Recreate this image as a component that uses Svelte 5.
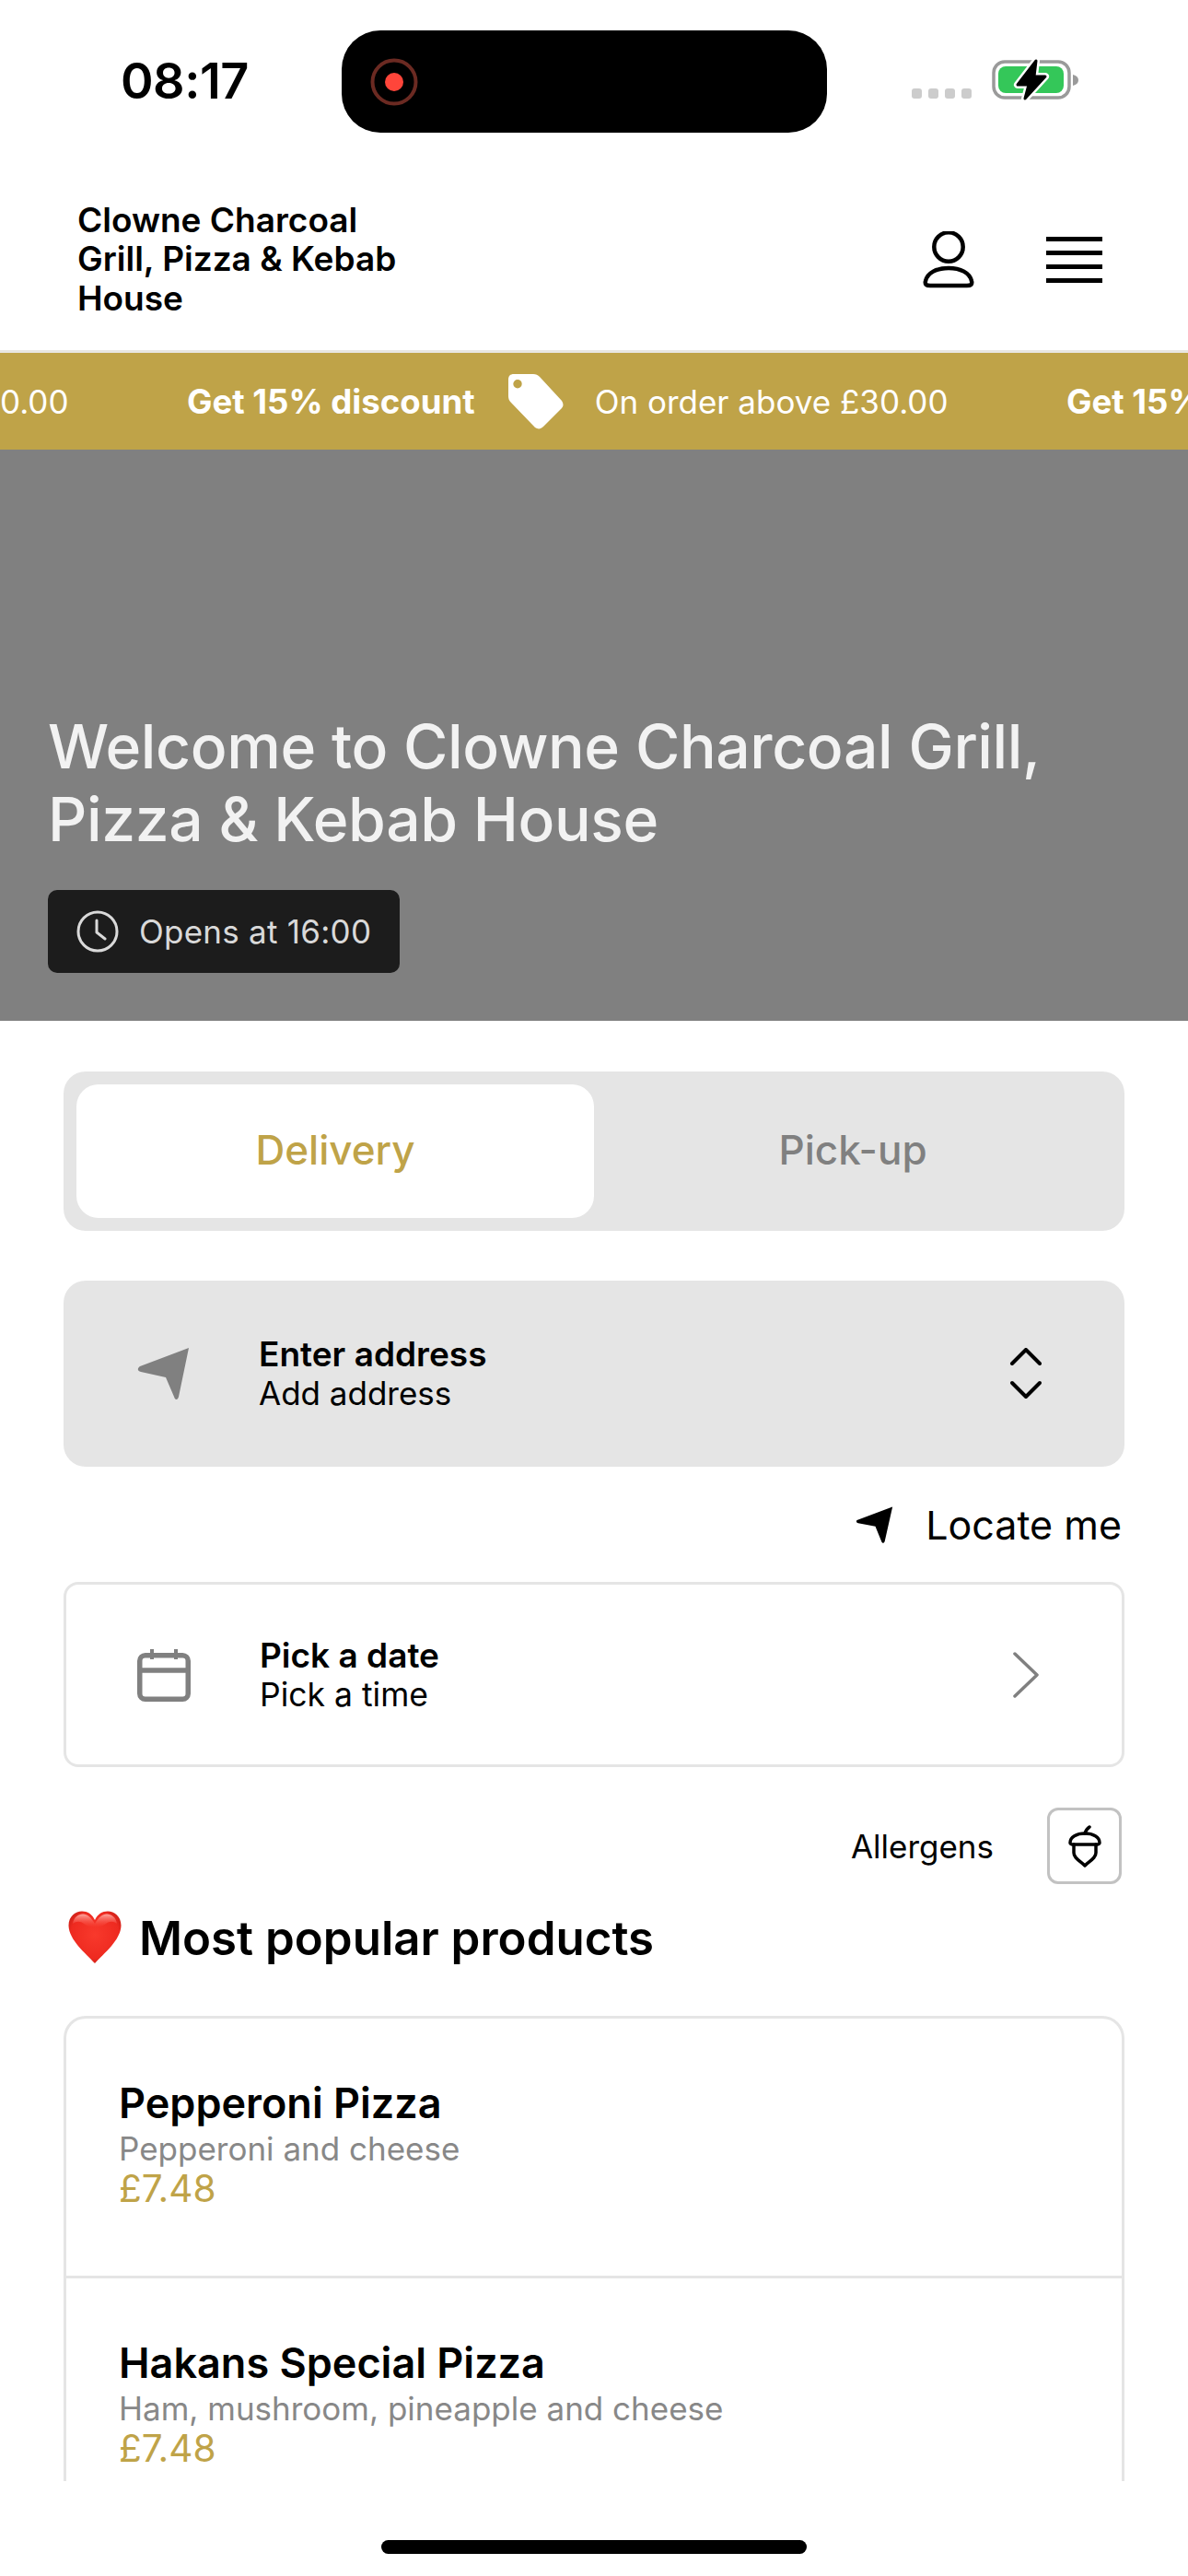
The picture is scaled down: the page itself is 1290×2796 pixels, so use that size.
<script lang="ts">
  const products = [
    { name: 'Pepperoni Pizza', description: 'Pepperoni and cheese', price: '£7.48' },
    { name: 'Hakans Special Pizza', description: 'Ham, mushroom, pineapple and cheese', price: '£7.48' }
  ];
  const promos = [0, 1, 2];
</script>

<div class="screen">
  <div class="status-bar">
    <span class="time">08:17</span>
    <div class="island">
      <svg class="record" width="52" height="52" viewBox="0 0 52 52">
        <circle cx="26" cy="26" r="23.5" fill="none" stroke="#6b2a22" stroke-width="4" />
        <circle cx="26" cy="26" r="10" fill="#ff453a" />
      </svg>
    </div>
    <div class="signal">
      <i></i><i></i><i></i><i></i>
    </div>
    <svg class="battery" width="96" height="56" viewBox="0 0 96 56">
      <rect x="2" y="7" width="82" height="39" rx="12" fill="none" stroke="#9a9a9a" stroke-width="3.5" />
      <rect x="7" y="12" width="71" height="29" rx="8" fill="#34c759" />
      <path d="M88 21 C92 22 94 24 94 27 C94 30 92 32 88 33 Z" fill="#9a9a9a" />
      <path d="M48 6 L28 32 L40 32 L36 47 L58 23 L46 23 Z" fill="#fff" stroke="#fff" stroke-width="8" stroke-linejoin="round" />
      <path d="M48 6 L28 32 L40 32 L36 47 L58 23 L46 23 Z" fill="#000" stroke="#000" stroke-width="3" stroke-linejoin="round" />
    </svg>
  </div>

  <header class="top-bar">
    <h1 class="brand">Clowne Charcoal<br />Grill, Pizza &amp; Kebab<br />House</h1>
    <div class="top-actions">
      <svg width="58" height="62" viewBox="0 0 58 62" fill="none" stroke="#000" stroke-width="4.5">
        <circle cx="29" cy="17" r="15.7" />
        <path d="M29 40 C42 40 52 45 54 54 C55 58 53 59 49 59 L9 59 C5 59 3 58 4 54 C6 45 16 40 29 40 Z" />
      </svg>
      <svg width="61" height="50" viewBox="0 0 61 50" fill="#000">
        <rect y="0" width="61" height="5" />
        <rect y="15" width="61" height="5" />
        <rect y="30" width="61" height="5" />
        <rect y="45" width="61" height="5" />
      </svg>
    </div>
  </header>

  <div class="promo">
    <div class="promo-track">
      {#each promos as _}
        <div class="promo-item">
          <strong>Get 15% discount</strong>
          <svg width="62" height="62" viewBox="0 0 62 62">
            <path fill-rule="evenodd" fill="#fff" d="M7 1 L28 1 C31 1 33 2 35 4 L59 30 C61 33 61 36 59 38 L39 58 C36 61 33 61 30 59 L4 32 C2 30 1 28 1 25 L1 7 C1 3 3 1 7 1 Z M11 7 A4.7 4.7 0 1 0 11.01 16.4 A4.7 4.7 0 1 0 11 7 Z" />
          </svg>
          <span>On order above £30.00</span>
        </div>
      {/each}
    </div>
  </div>

  <section class="hero">
    <h2>Welcome to Clowne Charcoal Grill,<br />Pizza &amp; Kebab House</h2>
    <div class="opens">
      <svg width="46" height="46" viewBox="0 0 46 46" fill="none" stroke="#d9d9d9" stroke-width="3">
        <circle cx="23" cy="23" r="21" />
        <path d="M22 11 L22 24 L31 31" stroke-linecap="round" stroke-linejoin="round" />
      </svg>
      <span>Opens at 16:00</span>
    </div>
  </section>

  <main class="content">
    <div class="tabs">
      <button type="button" class="tab active">Delivery</button>
      <button type="button" class="tab">Pick-up</button>
    </div>

    <div class="field filled">
      <svg class="field-icon" width="58" height="58" viewBox="0 0 58 58">
        <path d="M56 1 L45 54 C44 58 41 58 40 54 L31 33 L4 27 C0 26 0 23 3 21 Z" fill="#808080" />
      </svg>
      <div class="field-text">
        <strong>Enter address</strong>
        <span>Add address</span>
      </div>
      <svg class="field-end" width="36" height="56" viewBox="0 0 36 56" fill="none" stroke="#000" stroke-width="4" stroke-linecap="round" stroke-linejoin="round">
        <path d="M3 17 L18 2 L33 17" />
        <path d="M3 38 L18 53 L33 38" />
      </svg>
    </div>

    <div class="locate">
      <svg width="41" height="42" viewBox="0 0 44 44">
        <path d="M42 1 L33 41 C32 44 30 44 29 41 L22 24 L2 20 C-1 19 -1 17 2 16 Z" fill="#000" />
      </svg>
      <span>Locate me</span>
    </div>

    <div class="field outlined">
      <svg class="field-icon" width="58" height="58" viewBox="0 0 58 58" fill="none" stroke="#808080" stroke-width="5.5">
        <rect x="2.75" y="7.75" width="52.5" height="47.5" rx="6" />
        <path d="M2.5 24 L55.5 24" />
        <path d="M16 1 L16 12 M42 1 L42 12" stroke-width="4" />
      </svg>
      <div class="field-text">
        <strong>Pick a date</strong>
        <span>Pick a time</span>
      </div>
      <svg class="field-end" width="36" height="50" viewBox="0 0 36 50" fill="none" stroke="#808080" stroke-width="3.5" stroke-linecap="round" stroke-linejoin="round">
        <path d="M7 2 L31 25 L7 48" />
      </svg>
    </div>

    <div class="allergens">
      <span>Allergens</span>
      <button type="button" class="allergen-button" aria-label="Allergens">
        <svg width="38" height="46" viewBox="0 0 38 46" fill="none" stroke="#000" stroke-width="3.5" stroke-linecap="round" stroke-linejoin="round">
          <path d="M19 9 C20 6 21 4 24 2" />
          <path d="M3 19 C3 13 10 9 19 9 C28 9 35 13 35 19 C35 20 34 21 33 21 L5 21 C4 21 3 20 3 19 Z" />
          <path d="M7 21 L7 30 C7 36 14 39 19 44 C24 39 31 36 31 30 L31 21" />
        </svg>
      </button>
    </div>

    <h3 class="section-title">
      <svg width="58" height="58" viewBox="0 0 58 58">
        <defs>
          <radialGradient id="heartFill" cx="50%" cy="45%" r="65%">
            <stop offset="0%" stop-color="#f8392c" />
            <stop offset="70%" stop-color="#ee2a20" />
            <stop offset="100%" stop-color="#b81a12" />
          </radialGradient>
          <linearGradient id="heartShine" x1="0" y1="0" x2="0" y2="1">
            <stop offset="0%" stop-color="#ffb3ab" stop-opacity="0.9" />
            <stop offset="100%" stop-color="#ff5a4e" stop-opacity="0" />
          </linearGradient>
        </defs>
        <path d="M29 57 C19 46 1 32 0.5 16 C0.5 6 8 0.5 15 0.5 C21 0.5 26 3.5 29 10 C32 3.5 37 0.5 43 0.5 C50 0.5 57.5 6 57.5 16 C57 32 39 46 29 57 Z" fill="url(#heartFill)" />
        <path d="M5 14 C6 7 11 3.5 16 3.5 C21 3.5 25 7 29 14 C33 7 37 3.5 42 3.5 C47 3.5 52 7 53 14 C49 11 45 11 41 14 C37 17 33 18 29 18 C25 18 21 17 17 14 C13 11 9 11 5 14 Z" fill="url(#heartShine)" />
      </svg>
      <span>Most popular products</span>
    </h3>

    <div class="product-list">
      {#each products as product}
        <article class="product">
          <h4>{product.name}</h4>
          <p class="description">{product.description}</p>
          <p class="price">{product.price}</p>
        </article>
      {/each}
    </div>
  </main>

  <div class="home-bar"><div class="home-indicator"></div></div>
</div>

<style>
  :global(body) {
    margin: 0;
    background: #fff;
  }

  .screen {
    width: 1290px;
    height: 2796px;
    display: flex;
    flex-direction: column;
    overflow: hidden;
    background: #fff;
    color: #000;
    font-family: 'Inter', 'Liberation Sans', sans-serif;
  }

  .status-bar {
    height: 190px;
    flex: none;
    box-sizing: border-box;
    padding: 33px 0 0 131px;
    display: flex;
    align-items: flex-start;
  }

  .time {
    width: 240px;
    height: 111px;
    line-height: 110px;
    font-size: 54px;
    font-weight: 600;
    letter-spacing: -0.5px;
  }

  .island {
    width: 527px;
    height: 111px;
    border-radius: 42px;
    background: #000;
    display: flex;
    align-items: center;
    padding-left: 31px;
    box-sizing: border-box;
  }

  .signal {
    display: flex;
    gap: 7px;
    margin: 63px 0 0 92px;
  }

  .signal i {
    width: 11px;
    height: 11px;
    border-radius: 3px;
    background: #cccccc;
  }

  .battery {
    margin: 27px 0 0 22px;
  }

  .top-bar {
    height: 190px;
    flex: none;
    box-sizing: border-box;
    padding: 0 93px 7px 84px;
    display: flex;
    align-items: center;
    justify-content: space-between;
  }

  .brand {
    margin: 0;
    font-size: 37px;
    font-weight: 600;
    line-height: 42.5px;
  }

  .top-actions {
    display: flex;
    align-items: center;
    gap: 77px;
    margin-top: 0;
  }

  .promo {
    flex: none;
    height: 105px;
    border-top: 3px solid #e8e6e1;
    background: #bfa348;
    overflow: hidden;
    display: flex;
    align-items: center;
  }

  .promo-track {
    display: flex;
    margin-left: -752px;
  }

  .promo-item {
    flex: none;
    width: 955px;
    display: flex;
    align-items: center;
    color: #fff;
    font-size: 35px;
    white-space: nowrap;
  }

  .promo-item strong {
    font-size: 36.6px;
    font-weight: 700;
  }

  .promo-item svg {
    margin: 0 33px 0 35px;
  }

  .hero {
    flex: none;
    height: 620px;
    box-sizing: border-box;
    padding: 0 52px 52px;
    background: #808080;
    display: flex;
    flex-direction: column;
    justify-content: flex-end;
    align-items: flex-start;
  }

  .hero h2 {
    margin: 0 0 37px;
    font-size: 66px;
    font-weight: 500;
    line-height: 79px;
    letter-spacing: -0.4px;
    color: #f2f2f2;
  }

  .opens {
    box-sizing: border-box;
    width: 382px;
    height: 90px;
    padding-left: 31px;
    border-radius: 10px;
    background: #1c1c1c;
    display: flex;
    align-items: center;
    gap: 22px;
    color: #d9d9d9;
    font-size: 35px;
    letter-spacing: 0.25px;
  }

  .content {
    flex: 1;
    min-height: 0;
    padding: 55px 69px 0;
    overflow: hidden;
  }

  .tabs {
    box-sizing: border-box;
    height: 173px;
    padding: 14px;
    border-radius: 24px;
    background: #e5e5e5;
    display: grid;
    grid-template-columns: 562px 1fr;
  }

  .tab {
    border: 0;
    border-radius: 24px;
    padding: 0 0 3px;
    background: transparent;
    color: #808080;
    font: 500 44px 'Inter', 'Liberation Sans', sans-serif;
  }

  .tab.active {
    background: #fff;
    color: #bfa348;
  }

  .field {
    box-sizing: border-box;
    height: 202px;
    display: flex;
    align-items: center;
    padding: 0 89px 0 80px;
    border-radius: 24px;
  }

  .field.filled {
    margin-top: 54px;
    background: #e5e5e5;
  }

  .field.outlined {
    height: 201px;
    border: 3px solid #e5e5e5;
    border-radius: 16px;
    padding: 0 87px 0 77px;
  }

  .field-icon {
    flex: none;
  }

  .field-text {
    flex: 1;
    margin-left: 74px;
    display: flex;
    flex-direction: column;
    font-size: 35px;
    line-height: 43px;
  }

  .field-text strong {
    font-size: 37px;
    font-weight: 600;
  }

  .outlined .field-text {
    margin-left: 75px;
    font-size: 35.5px;
  }

  .locate {
    height: 125px;
    display: flex;
    align-items: center;
    justify-content: flex-end;
    gap: 34px;
    padding-right: 3px;
    font-size: 43px;
  }

  .allergens {
    margin-top: 44px;
    height: 83px;
    display: flex;
    align-items: center;
    justify-content: flex-end;
    gap: 58px;
    padding-right: 3px;
    font-size: 35px;
  }

  .allergen-button {
    box-sizing: border-box;
    width: 81px;
    height: 83px;
    padding: 0;
    border: 3px solid #c2c2c2;
    border-radius: 12px;
    background: #fff;
    display: flex;
    align-items: center;
    justify-content: center;
  }

  .section-title {
    height: 116px;
    margin: 0;
    padding-left: 5px;
    display: flex;
    align-items: center;
    gap: 19px;
    font-size: 51px;
    font-weight: 600;
  }

  .product-list {
    margin-top: 27px;
    border: 3px solid #e5e5e5;
    border-bottom: 0;
    border-radius: 24px 24px 0 0;
    height: 502px;
    overflow: hidden;
  }

  .product {
    padding: 66px 57px 72px;
  }

  .product + .product {
    border-top: 3px solid #e5e5e5;
  }

  .product h4 {
    margin: 0 0 1px;
    font-size: 45px;
    font-weight: 600;
    line-height: 52px;
  }

  .product p {
    margin: 0;
    line-height: 44px;
  }

  .description {
    color: #888888;
    font-size: 35px;
  }

  .price {
    color: #bfa348;
    font-size: 40.5px;
  }

  .home-bar {
    flex: none;
    height: 103px;
    display: flex;
    justify-content: center;
    padding-top: 64px;
    box-sizing: border-box;
  }

  .home-indicator {
    width: 462px;
    height: 15px;
    border-radius: 8px;
    background: #000;
  }
</style>
